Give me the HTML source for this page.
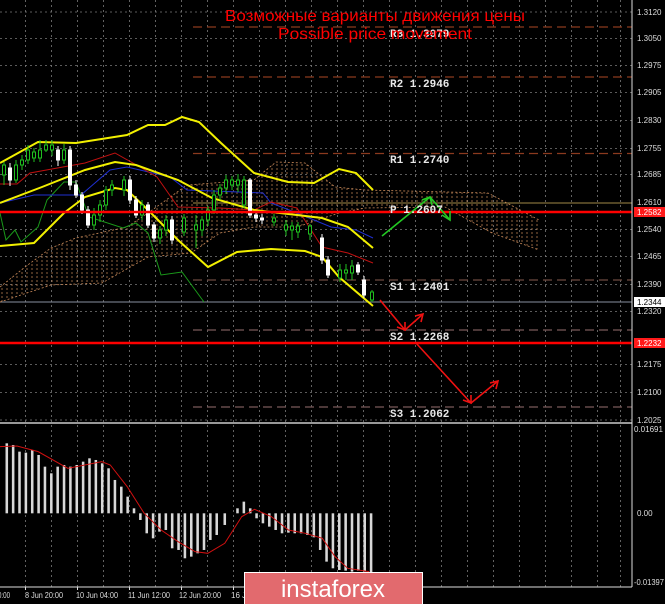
<!DOCTYPE html>
<html><head><meta charset="utf-8"><style>
html,body{margin:0;padding:0;background:#000;width:665px;height:604px;overflow:hidden}
svg{display:block}
.mono{font-family:"Liberation Mono",monospace}
.ax{font-family:"Liberation Sans",sans-serif;font-size:8px;fill:#ddd}
.ttl{font-family:"Liberation Sans","DejaVu Sans",sans-serif;font-size:16px;fill:#ff0000}
.logo{font-family:"Liberation Sans","DejaVu Sans",sans-serif;font-size:24px;fill:#fff}
</style></head><body>
<svg width="665" height="604" viewBox="0 0 665 604" xmlns="http://www.w3.org/2000/svg">
<defs>
<pattern id="vp" width="5" height="4" patternUnits="userSpaceOnUse"><line x1="2" y1="0" x2="2" y2="2" stroke="#c98a5a" stroke-width="0.8"/></pattern>
</defs>
<rect width="665" height="604" fill="#000"/>
<g stroke="#7a7a7a" stroke-width="0.8" stroke-dasharray="2,3">
<line x1="25.5" y1="0" x2="25.5" y2="587"/><line x1="51.5" y1="0" x2="51.5" y2="587"/><line x1="77.5" y1="0" x2="77.5" y2="587"/><line x1="103.5" y1="0" x2="103.5" y2="587"/><line x1="129.5" y1="0" x2="129.5" y2="587"/><line x1="155.5" y1="0" x2="155.5" y2="587"/><line x1="181.5" y1="0" x2="181.5" y2="587"/><line x1="207.5" y1="0" x2="207.5" y2="587"/><line x1="233.5" y1="0" x2="233.5" y2="587"/><line x1="259.5" y1="0" x2="259.5" y2="587"/><line x1="285.5" y1="0" x2="285.5" y2="587"/><line x1="311.5" y1="0" x2="311.5" y2="587"/><line x1="337.5" y1="0" x2="337.5" y2="587"/><line x1="363.5" y1="0" x2="363.5" y2="587"/><line x1="389.5" y1="0" x2="389.5" y2="587"/><line x1="415.5" y1="0" x2="415.5" y2="587"/><line x1="441.5" y1="0" x2="441.5" y2="587"/><line x1="467.5" y1="0" x2="467.5" y2="587"/><line x1="493.5" y1="0" x2="493.5" y2="587"/><line x1="519.5" y1="0" x2="519.5" y2="587"/><line x1="545.5" y1="0" x2="545.5" y2="587"/><line x1="571.5" y1="0" x2="571.5" y2="587"/><line x1="597.5" y1="0" x2="597.5" y2="587"/><line x1="620.5" y1="0" x2="620.5" y2="587"/>
<line x1="0" y1="12" x2="632" y2="12"/><line x1="0" y1="38.5" x2="632" y2="38.5"/><line x1="0" y1="65.5" x2="632" y2="65.5"/><line x1="0" y1="92.5" x2="632" y2="92.5"/><line x1="0" y1="120.5" x2="632" y2="120.5"/><line x1="0" y1="148.5" x2="632" y2="148.5"/><line x1="0" y1="174.5" x2="632" y2="174.5"/><line x1="0" y1="229.5" x2="632" y2="229.5"/><line x1="0" y1="256.5" x2="632" y2="256.5"/><line x1="0" y1="284.5" x2="632" y2="284.5"/><line x1="0" y1="311.5" x2="632" y2="311.5"/><line x1="0" y1="364.5" x2="632" y2="364.5"/><line x1="0" y1="392.5" x2="632" y2="392.5"/><line x1="0" y1="420" x2="632" y2="420"/>
</g>
<g stroke-width="1.3" stroke-dasharray="9,5">
<line x1="193" y1="27" x2="632" y2="27" stroke="#8b3a1e"/>
<line x1="193" y1="77" x2="632" y2="77" stroke="#8b3a1e"/>
<line x1="193" y1="153.5" x2="632" y2="153.5" stroke="#8b3a1e"/>
<line x1="193" y1="280" x2="632" y2="280" stroke="#6e4a40"/>
<line x1="193" y1="330" x2="632" y2="330" stroke="#7a5a5a"/>
<line x1="193" y1="407" x2="632" y2="407" stroke="#7a5a5a"/>
</g>
<line x1="193" y1="203" x2="632" y2="203" stroke="#d8b860" stroke-width="0.8"/>
<line x1="0" y1="302" x2="632" y2="302" stroke="#8890a0" stroke-width="1"/>
<polygon points="0,287 25,267 51,248 76,238 127,227 148,213 187,185 254,180 276,162 305,163 335,187 365,190 488,193 539,220 539,250 492,233 445,207 365,208 339,213 297,227 254,227 220,233 191,253 148,257 102,283 51,285 0,302" fill="url(#vp)" opacity="0.9"/>
<polyline points="0,287 25,267 51,248 76,238 127,227 148,213 187,185 254,180 276,162 305,163 335,187 365,190 488,193 539,220" fill="none" stroke="#c98a5a" stroke-width="0.8" stroke-dasharray="2,2"/>
<polyline points="0,302 51,285 102,283 148,257 191,253 220,233 254,227 297,227 339,213 365,208 445,207 492,233 539,250" fill="none" stroke="#c98a5a" stroke-width="0.8" stroke-dasharray="2,2"/>
<polyline points="0,213 6,240 15,230 21,242 38,227 47,200 64,182 76,182 89,217 123,228 136,223 148,233 161,275 182,272 204,302" fill="none" stroke="#1a9a1a" stroke-width="1"/>
<polyline points="0,203 34,195 81,195 110,170 127,167 170,177 187,190 263,193 271,203 297,213 331,227 356,230 373,238" fill="none" stroke="#1f2fd0" stroke-width="1"/>
<polyline points="0,184 17,184 30,173 85,163 115,153 140,167 157,177 178,207 220,208 254,210 271,202 297,208 322,247 348,253 373,263" fill="none" stroke="#c01010" stroke-width="1"/>
<g fill="none" stroke="#f2f000" stroke-width="2">
<polyline points="0,163 38,142 76,143 127,135 148,125 165,125 182,117 199,122 221,143 254,173 288,182 314,183 339,169 356,173 373,190"/>
<polyline points="0,203 42,187 85,170 115,162 136,165 178,180 212,198 254,210 297,215 322,218 348,227 373,248"/>
<polyline points="0,246 34,243 64,213 85,197 115,188 127,190 148,210 178,240 208,267 237,252 271,249 305,251 322,257 339,277 373,306"/>
</g>
<g stroke-width="1">
<g stroke="#fff" fill="#fff">
<line x1="10" y1="163" x2="10" y2="186"/><rect x="8.5" y="168" width="3" height="12"/>
<line x1="58" y1="146" x2="58" y2="166"/><rect x="56.5" y="150" width="3" height="10"/>
<line x1="70" y1="146" x2="70" y2="190"/><rect x="68.5" y="150" width="3" height="35"/>
<line x1="76" y1="180" x2="76" y2="198"/><rect x="74.5" y="185" width="3" height="10"/>
<line x1="82" y1="192" x2="82" y2="214"/><rect x="80.5" y="195" width="3" height="15"/>
<line x1="88" y1="206" x2="88" y2="228"/><rect x="86.5" y="210" width="3" height="15"/>
<line x1="130" y1="176" x2="130" y2="204"/><rect x="128.5" y="180" width="3" height="20"/>
<line x1="136" y1="196" x2="136" y2="218"/><rect x="134.5" y="200" width="3" height="15"/>
<line x1="148" y1="202" x2="148" y2="228"/><rect x="146.5" y="205" width="3" height="20"/>
<line x1="154" y1="222" x2="154" y2="242"/><rect x="152.5" y="225" width="3" height="13"/>
<line x1="172" y1="216" x2="172" y2="244"/><rect x="170.5" y="220" width="3" height="20"/>
<line x1="250" y1="178" x2="250" y2="218"/><rect x="248.5" y="180" width="3" height="35"/>
<line x1="256" y1="212" x2="256" y2="222"/><rect x="254.5" y="215" width="3" height="3"/>
<line x1="262" y1="214" x2="262" y2="224"/><rect x="260.5" y="218" width="3" height="2"/>
<line x1="322" y1="234" x2="322" y2="264"/><rect x="320.5" y="238" width="3" height="22"/>
<line x1="328" y1="256" x2="328" y2="278"/><rect x="326.5" y="260" width="3" height="15"/>
<line x1="358" y1="262" x2="358" y2="275"/><rect x="356.5" y="265" width="3" height="7"/>
<line x1="364" y1="276" x2="364" y2="298"/><rect x="362.5" y="280" width="3" height="15"/>
</g>
<g stroke="#1fbf1f" fill="#000">
<line x1="4" y1="162" x2="4" y2="185"/><rect x="2.5" y="165" width="3" height="10"/>
<line x1="16" y1="160" x2="16" y2="183"/><rect x="14.5" y="165" width="3" height="15"/>
<line x1="22" y1="155" x2="22" y2="170"/><rect x="20.5" y="160" width="3" height="5"/>
<line x1="28" y1="145" x2="28" y2="164"/><rect x="26.5" y="150" width="3" height="10"/>
<line x1="34" y1="148" x2="34" y2="162"/><rect x="32.5" y="152" width="3" height="6"/>
<line x1="40" y1="140" x2="40" y2="162"/><rect x="38.5" y="150" width="3" height="8"/>
<line x1="46" y1="140" x2="46" y2="152"/><rect x="44.5" y="145" width="3" height="5"/>
<line x1="52" y1="140" x2="52" y2="156"/><rect x="50.5" y="145" width="3" height="5"/>
<line x1="64" y1="144" x2="64" y2="164"/><rect x="62.5" y="150" width="3" height="10"/>
<line x1="94" y1="208" x2="94" y2="230"/><rect x="92.5" y="215" width="3" height="10"/>
<line x1="100" y1="200" x2="100" y2="222"/><rect x="98.5" y="205" width="3" height="10"/>
<line x1="106" y1="186" x2="106" y2="210"/><rect x="104.5" y="190" width="3" height="15"/>
<line x1="112" y1="180" x2="112" y2="196"/><rect x="110.5" y="185" width="3" height="5"/>
<line x1="124" y1="176" x2="124" y2="196"/><rect x="122.5" y="180" width="3" height="10"/>
<line x1="142" y1="200" x2="142" y2="220"/><rect x="140.5" y="205" width="3" height="10"/>
<line x1="160" y1="226" x2="160" y2="244"/><rect x="158.5" y="230" width="3" height="8"/>
<line x1="166" y1="215" x2="166" y2="236"/><rect x="164.5" y="220" width="3" height="10"/>
<line x1="184" y1="214" x2="184" y2="236"/><rect x="182.5" y="218" width="3" height="14"/>
<line x1="196" y1="215" x2="196" y2="248"/><rect x="194.5" y="225" width="3" height="5"/>
<line x1="202" y1="216" x2="202" y2="236"/><rect x="200.5" y="220" width="3" height="10"/>
<line x1="208" y1="206" x2="208" y2="226"/><rect x="206.5" y="210" width="3" height="10"/>
<line x1="214" y1="190" x2="214" y2="214"/><rect x="212.5" y="195" width="3" height="15"/>
<line x1="220" y1="184" x2="220" y2="200"/><rect x="218.5" y="188" width="3" height="7"/>
<line x1="226" y1="175" x2="226" y2="194"/><rect x="224.5" y="180" width="3" height="8"/>
<line x1="232" y1="176" x2="232" y2="190"/><rect x="230.5" y="180" width="3" height="5"/>
<line x1="238" y1="174" x2="238" y2="192"/><rect x="236.5" y="180" width="3" height="5"/>
<line x1="244" y1="176" x2="244" y2="208"/><rect x="242.5" y="180" width="3" height="25"/>
<line x1="274" y1="214" x2="274" y2="226"/><rect x="272.5" y="218" width="3" height="4"/>
<line x1="286" y1="220" x2="286" y2="236"/><rect x="284.5" y="225" width="3" height="5"/>
<line x1="292" y1="222" x2="292" y2="240"/><rect x="290.5" y="226" width="3" height="4"/>
<line x1="298" y1="222" x2="298" y2="238"/><rect x="296.5" y="226" width="3" height="6"/>
<line x1="310" y1="224" x2="310" y2="240"/><rect x="308.5" y="226" width="3" height="8"/>
<line x1="340" y1="264" x2="340" y2="282"/><rect x="338.5" y="270" width="3" height="8"/>
<line x1="346" y1="264" x2="346" y2="280"/><rect x="344.5" y="270" width="3" height="3"/>
<line x1="352" y1="260" x2="352" y2="280"/><rect x="350.5" y="266" width="3" height="7"/>
<line x1="372" y1="290" x2="372" y2="302"/><rect x="370.5" y="292" width="3" height="8"/>
</g>
</g>
<line x1="0" y1="212" x2="632" y2="212" stroke="#ff0000" stroke-width="2.5"/>
<line x1="0" y1="343" x2="632" y2="343" stroke="#ff0000" stroke-width="2.5"/>
<g fill="none" stroke-width="1.6">
<polyline points="382,236 430,197 450,220" stroke="#22c922"/>
<polyline points="380,300 405,330 423,314" stroke="#ee1111"/>
<polyline points="416,343 471,403 498,381" stroke="#ee1111"/>
<polyline points="422,200 430,197 432,205" stroke="#22c922"/>
<polyline points="442,215 450,220 450,211" stroke="#22c922"/>
<polyline points="397,327 405,330 405,322" stroke="#ee1111"/>
<polyline points="415,316 423,314 421,322" stroke="#ee1111"/>
<polyline points="463,400 471,403 471,395" stroke="#ee1111"/>
<polyline points="490,383 498,381 496,389" stroke="#ee1111"/>
</g>
<g font-size="11" fill="#e8e8e8" font-weight="bold">
<text class="mono" x="390" y="37">R3 1.3079</text>
<text class="mono" x="390" y="87">R2 1.2946</text>
<text class="mono" x="390" y="163">R1 1.2740</text>
<text class="mono" x="390" y="213">P 1.2607</text>
<text class="mono" x="390" y="290">S1 1.2401</text>
<text class="mono" x="390" y="340">S2 1.2268</text>
<text class="mono" x="390" y="417">S3 1.2062</text>
</g>
<text class="ttl" x="225" y="21" textLength="300" lengthAdjust="spacingAndGlyphs">Возможные варианты движения цены</text>
<text class="ttl" x="278" y="39" textLength="194" lengthAdjust="spacingAndGlyphs">Possible price movement</text>
<line x1="0" y1="423" x2="632" y2="423" stroke="#ccc" stroke-width="1.5"/>
<g transform="translate(0,300) scale(0.4241,0.3333)">
<g fill="#d8d8d8">
<rect x="13" y="430" width="6" height="210"/><rect x="28" y="435" width="6" height="205"/><rect x="43" y="455" width="6" height="185"/><rect x="58" y="458" width="6" height="182"/><rect x="73" y="450" width="6" height="190"/><rect x="88" y="465" width="6" height="175"/><rect x="103" y="500" width="6" height="140"/><rect x="118" y="520" width="6" height="120"/><rect x="133" y="500" width="6" height="140"/><rect x="148" y="495" width="6" height="145"/><rect x="163" y="500" width="6" height="140"/><rect x="178" y="495" width="6" height="145"/><rect x="193" y="485" width="6" height="155"/><rect x="208" y="475" width="6" height="165"/><rect x="223" y="480" width="6" height="160"/><rect x="238" y="490" width="6" height="150"/><rect x="253" y="505" width="6" height="135"/><rect x="268" y="540" width="6" height="100"/><rect x="283" y="560" width="6" height="80"/><rect x="298" y="590" width="6" height="50"/><rect x="313" y="625" width="6" height="15"/>
<rect x="328" y="640" width="6" height="20"/><rect x="343" y="640" width="6" height="60"/><rect x="358" y="640" width="6" height="75"/><rect x="373" y="640" width="6" height="55"/><rect x="388" y="640" width="6" height="50"/><rect x="403" y="640" width="6" height="105"/><rect x="418" y="640" width="6" height="110"/><rect x="433" y="640" width="6" height="135"/><rect x="448" y="640" width="6" height="130"/><rect x="463" y="640" width="6" height="120"/><rect x="478" y="640" width="6" height="110"/><rect x="493" y="640" width="6" height="80"/><rect x="508" y="640" width="6" height="65"/><rect x="527" y="640" width="6" height="35"/>
<rect x="557" y="625" width="6" height="15"/><rect x="572" y="605" width="6" height="35"/><rect x="587" y="625" width="6" height="15"/>
<rect x="602" y="640" width="6" height="15"/><rect x="617" y="640" width="6" height="30"/><rect x="632" y="640" width="6" height="40"/><rect x="647" y="640" width="6" height="50"/><rect x="662" y="640" width="6" height="60"/><rect x="677" y="640" width="6" height="58"/><rect x="692" y="640" width="6" height="60"/><rect x="707" y="640" width="6" height="60"/><rect x="722" y="640" width="6" height="65"/><rect x="737" y="640" width="6" height="72"/><rect x="752" y="640" width="6" height="110"/><rect x="767" y="640" width="6" height="145"/><rect x="782" y="640" width="6" height="165"/><rect x="797" y="640" width="6" height="170"/><rect x="812" y="640" width="6" height="172"/><rect x="827" y="640" width="6" height="175"/><rect x="842" y="640" width="6" height="172"/><rect x="857" y="640" width="6" height="175"/><rect x="872" y="640" width="6" height="180"/>
</g>
<polyline vector-effect="non-scaling-stroke" points="0,440 40,438 90,455 160,505 240,485 260,495 300,560 340,640 380,690 420,725 460,755 490,760 530,730 570,650 600,628 640,650 680,690 720,700 760,715 790,770 820,805 870,815" fill="none" stroke="#d01010" stroke-width="1"/>
</g>
<line x1="0" y1="587" x2="632" y2="587" stroke="#ddd" stroke-width="1"/>
<g stroke="#ddd" stroke-width="1">
<line x1="25.5" y1="587" x2="25.5" y2="590"/><line x1="77.5" y1="587" x2="77.5" y2="590"/><line x1="129.5" y1="587" x2="129.5" y2="590"/><line x1="181.5" y1="587" x2="181.5" y2="590"/><line x1="233.5" y1="587" x2="233.5" y2="590"/>
</g>
<line x1="632" y1="0" x2="632" y2="587" stroke="#ddd" stroke-width="1"/>
<text class="ax" x="637" y="15">1.3120</text><text class="ax" x="637" y="41">1.3050</text><text class="ax" x="637" y="68">1.2975</text><text class="ax" x="637" y="95">1.2905</text><text class="ax" x="637" y="123">1.2830</text><text class="ax" x="637" y="151">1.2755</text><text class="ax" x="637" y="177">1.2685</text><text class="ax" x="637" y="205">1.2610</text><text class="ax" x="637" y="232">1.2540</text><text class="ax" x="637" y="259">1.2465</text><text class="ax" x="637" y="287">1.2390</text><text class="ax" x="637" y="314">1.2320</text><text class="ax" x="637" y="367">1.2175</text><text class="ax" x="637" y="395">1.2100</text><text class="ax" x="637" y="423">1.2025</text>
<text class="ax" x="634" y="432">0.01691</text><text class="ax" x="637" y="516">0.00</text><text class="ax" x="634" y="585" textLength="30" lengthAdjust="spacingAndGlyphs">-0.01397</text>
<rect x="634" y="207" width="31" height="10" fill="#ff1a1a"/><text class="ax" x="637" y="215" style="fill:#fff">1.2582</text>
<rect x="634" y="338" width="31" height="10" fill="#ff1a1a"/><text class="ax" x="637" y="346" style="fill:#fff">1.2232</text>
<rect x="634" y="297" width="31" height="10" fill="#fff"/><text class="ax" x="637" y="305" style="fill:#000">1.2344</text>
<text class="ax" x="-2" y="598" textLength="12" lengthAdjust="spacingAndGlyphs">0:00</text>
<text class="ax" x="25" y="598" textLength="38" lengthAdjust="spacingAndGlyphs">8 Jun 20:00</text>
<text class="ax" x="76" y="598" textLength="42" lengthAdjust="spacingAndGlyphs">10 Jun 04:00</text>
<text class="ax" x="128" y="598" textLength="42" lengthAdjust="spacingAndGlyphs">11 Jun 12:00</text>
<text class="ax" x="179" y="598" textLength="42" lengthAdjust="spacingAndGlyphs">12 Jun 20:00</text>
<text class="ax" x="231" y="598">16 J</text>
<rect x="244.5" y="572.5" width="178" height="32" fill="#e26a6e" stroke="#fff" stroke-width="1"/>
<text class="logo" x="333" y="597" text-anchor="middle">instaforex</text>
</svg>
</body></html>
